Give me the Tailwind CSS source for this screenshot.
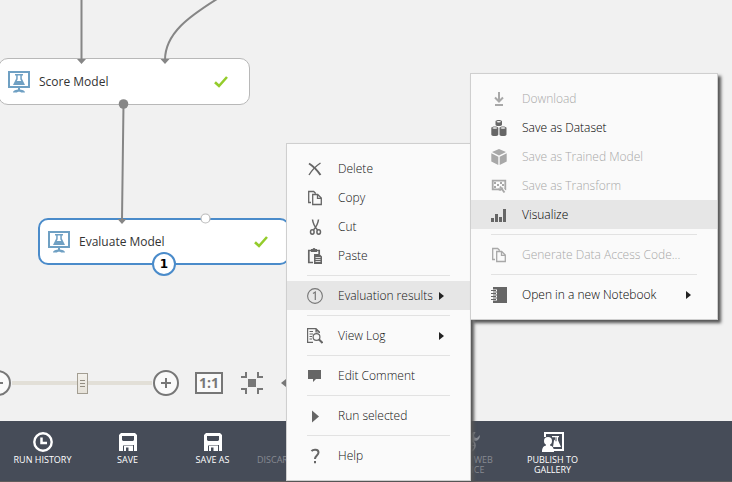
<!DOCTYPE html>
<html lang="en">
<head>
<meta charset="utf-8">
<meta name="viewport" content="width=device-width, initial-scale=1">
<title>Experiment</title>
<script src="https://cdn.jsdelivr.net/npm/@tailwindcss/browser@4"></script>
</head>
<body class="bg-[#f1f1f1] font-['Open_Sans','Noto_Sans',sans-serif] text-[12px] text-[#333]">
<svg class="hidden">
  <symbol id="module" viewBox="0 0 22 22">
    <path d="M1 1h20v15H1z" fill="#fff" stroke="#6fa0c3" stroke-width="2"/>
    <path d="M7 3h8v1.500h-1.200v3L17 14H5l3.200-6.500v-3H7z" fill="#6fa0c3"/>
    <path d="M9.700 4.500h2.600v3.700l.9 1.800H8.800l.9-1.800z" fill="#fff"/>
    <path d="M10 16h2v2.500h-2zM5 21.500c0-2 3-3 6-3s6 1 6 3h-4c0-1-4-1-4 0z" fill="#6fa0c3"/>
  </symbol>
  <symbol id="check" viewBox="0 0 14 12"><path d="M1 6.200 5 10 13 1" fill="none" stroke="#94cc2b" stroke-width="2.600"/></symbol>
  <symbol id="copy" viewBox="0 0 16 16"><path d="M4 12.500H1.700V1.500h5l2 2M5.700 4.500h5l3.600 3.600v6.400H5.700zM10.500 4.500v3.800h3.800" fill="none" stroke="currentColor" stroke-width="1.300"/></symbol>
  <symbol id="arrow" viewBox="0 0 5 8"><path d="M0 0l5 4-5 4z" fill="#222"/></symbol>
  <symbol id="floppy" viewBox="0 0 18 18"><path fill-rule="evenodd" d="M2 0h14l2 2v16h-3v-6H4v6H0V2zM3 3v4l1 1h10l1-1V3z" fill="#fff"/><path fill-rule="evenodd" d="M5 13h9v5H5zM7 14.500V18h2.500v-3.500z" fill="#fff"/><path d="M4 11.500h10v1H4z" fill="#fff"/></symbol>
</svg>
<div class="relative flex min-h-screen flex-col overflow-hidden">
  <main class="relative flex flex-1 flex-col justify-end pb-[25px]">
    <!-- Experiment graph -->
    <section aria-label="Experiment canvas">
      <div class="absolute top-[58px] left-[-2px] flex h-[47px] w-[252px] items-center rounded-[10px] border border-[#b8b8b8] bg-white pr-[21px] pl-[9px]">
        <svg class="size-[22px]"><use href="#module"/></svg>
        <span class="ml-[9px] flex-1">Score Model</span>
        <svg class="h-3 w-3.5"><use href="#check"/></svg>
      </div>
      <div class="absolute top-[218px] left-[38px] flex h-[47px] w-[252px] items-center rounded-[10px] border-2 border-[#4a8bca] bg-white pr-[20px] pl-[8px]">
        <svg class="size-[22px]"><use href="#module"/></svg>
        <span class="ml-[9px] flex-1">Evaluate Model</span>
        <svg class="h-3 w-3.5"><use href="#check"/></svg>
      </div>
      <svg class="absolute top-0 left-0 h-[300px] w-[285px]" fill="none" stroke="#868686" stroke-width="2">
        <path d="M81.500 0V60M165 60C165 33 190 16 217-1M123.500 104 122 219"/>
        <path d="M77 59h9l-4.500 5zM160.500 59h9l-4.500 5zM117.500 219h9l-4.500 5z" fill="#868686" stroke="none"/>
        <circle cx="123.500" cy="104" r="4.800" fill="#868686" stroke="none"/>
        <circle cx="205.500" cy="218.500" r="4.500" fill="#fff" stroke="#bbb" stroke-width="1.200"/>
      </svg>
      <span class="absolute top-[252px] left-[152px] flex size-6 items-center justify-center rounded-full border-2 border-[#4a8bca] bg-white font-['DejaVu_Sans',sans-serif] text-[12px] font-bold text-black">1</span>
    </section>
    <!-- Zoom controls -->
    <div class="-ml-[15px] flex h-[26px] items-center text-[#777]">
      <button aria-label="Zoom out"><svg class="size-[26px]" viewBox="0 0 26 26" fill="#fafafa" stroke="currentColor" stroke-width="2"><circle cx="13" cy="13" r="12"/><path d="M8 13h10"/></svg></button>
      <input type="range" aria-label="Zoom level" min="0" max="100" value="50" class="mx-px h-[22px] w-[140px] appearance-none bg-[linear-gradient(#e2dfd7,#e2dfd7)] bg-[length:100%_4px] bg-center bg-no-repeat [&::-webkit-slider-thumb]:h-[21px] [&::-webkit-slider-thumb]:w-[11px] [&::-webkit-slider-thumb]:appearance-none [&::-webkit-slider-thumb]:border [&::-webkit-slider-thumb]:border-[#a39e92] [&::-webkit-slider-thumb]:bg-[linear-gradient(#928d82_1px,transparent_1px_3px,#928d82_3px_4px,transparent_4px_6px,#928d82_6px_7px),linear-gradient(#f3f1ec,#e6e2d9)] [&::-webkit-slider-thumb]:bg-[length:5px_7px,100%_100%] [&::-webkit-slider-thumb]:bg-center [&::-webkit-slider-thumb]:bg-no-repeat">
      <button aria-label="Zoom in"><svg class="size-[26px]" viewBox="0 0 26 26" fill="#fafafa" stroke="currentColor" stroke-width="2"><circle cx="13" cy="13" r="12"/><path d="M8 13h10M13 8v10"/></svg></button>
      <button class="ml-4 flex h-[22px] w-7 items-center justify-center border-2 border-current bg-[#fafafa] text-[14px] leading-none font-bold">1:1</button>
      <button class="ml-[18px]" aria-label="Fit to screen"><svg class="size-[22px]" viewBox="0 0 22 22"><path d="M7 7h8v8H7z" fill="currentColor"/><path d="M0 5h5V0M17 0v5h5M0 17h5v5M17 22v-5h5" fill="none" stroke="currentColor" stroke-width="2"/></svg></button>
      <button class="ml-[18px]" aria-label="Collapse"><svg class="h-2 w-[5px]" viewBox="0 0 5 8"><path d="M5 0v8L0 4z" fill="currentColor"/></svg></button>
    </div>
  </main>

  <footer class="flex h-[61px] items-start border-b border-[#605c5c] bg-[#464c58] pt-[11px] text-[9px] leading-[10px] text-white [&>button]:flex [&>button]:w-[85px] [&>button]:shrink-0 [&>button]:flex-col [&>button]:items-center [&>button]:gap-[3px] [&>button]:whitespace-nowrap">
    <button><svg class="size-5" viewBox="0 0 20 20" fill="none" stroke="#fff"><circle cx="10" cy="10" r="8.700" stroke-width="2.400"/><path d="M8.500 5.500V11h5.500" stroke-width="2.500"/></svg>RUN HISTORY</button>
    <button><svg class="my-px size-[18px]"><use href="#floppy"/></svg>SAVE</button>
    <button><svg class="my-px size-[18px]"><use href="#floppy"/></svg>SAVE AS</button>
    <button disabled class="text-[#868a92]"><svg class="size-5" viewBox="0 0 20 20"><path d="M4 4l12 12M16 4 4 16" stroke="currentColor" stroke-width="2.500"/></svg>DISCARD CHANGES</button>
    <button><svg class="size-5" viewBox="0 0 20 20"><path d="M4 2l13 8-13 8z" fill="#fff"/></svg>RUN</button>
    <button disabled class="text-[#868a92]"><svg class="h-5 w-6" viewBox="0 0 24 20" fill="none" stroke="currentColor"><circle cx="13" cy="13.500" r="6" stroke-width="1.500"/><path d="M7 13.500h12M13 8c-3 4-3 7 0 11M13 8c3 4 3 7 0 11"/><path d="M20-1c-5 1-6 5-4 7L8 15l2.500 2.500L18 8.500c3 1 6-1 6-5.500l-3 3-2.500-.5-.5-2.500z" fill="currentColor" stroke="none"/></svg><span>SET UP WEB<br>SERVICE</span></button>
    <button><svg class="h-5 w-[22px]" viewBox="0 0 22 20" fill="#fff"><path fill-rule="evenodd" d="M2 0h20v19H11v-2h9V2H4v3H2z"/><path d="M10 4h7v1.200h-1v3l3 6.800h-8l1-6.500 1-1V5.200h-3z"/><path d="M13.500 5.200h1v4h-1z" fill="#464c58"/><circle cx="6" cy="9" r="4"/><path d="M0 20c0-5 2-6 4-6.500V11h4v2.500c2 .5 4 1.500 4 6.500z"/></svg><span>PUBLISH TO<br>GALLERY</span></button>
  </footer>

  <!-- Module context menu -->
  <div role="menu" class="absolute top-[143px] left-[286px] w-[185px] border border-[#cfcfcf] bg-[#fafafa] py-[10px] font-light text-[#111] shadow-[3px_3px_3px_#555] [&>button]:flex [&>button]:h-[29px] [&>button]:w-full [&>button]:items-center [&>button]:gap-[15px] [&>button]:px-5 [&>button]:text-left [&>button]:whitespace-nowrap [&>hr]:mx-5 [&>hr]:my-[5px] [&>hr]:border-[#e2e2e2]">
    <button role="menuitem"><svg class="size-4 shrink-0 text-[#666]" viewBox="0 0 16 16" fill="none" stroke="currentColor"><path d="M2 2.500C6 5 10 9 13.500 14" stroke-width="2"/><path d="M13.500 2C9 5 5 9 2 14" stroke-width="1.400"/></svg>Delete</button>
    <button role="menuitem"><svg class="size-4 shrink-0 text-[#666]"><use href="#copy"/></svg>Copy</button>
    <button role="menuitem"><svg class="size-4 shrink-0 text-[#666]" viewBox="0 0 16 16" fill="none" stroke="currentColor" stroke-width="1.500"><path d="M5.500.5C6 5 8 8 10.500 11M11.500.5C11 5 9 8 6.500 11"/><ellipse cx="5.300" cy="13" rx="1.800" ry="2.200"/><ellipse cx="11.700" cy="13" rx="1.800" ry="2.200"/></svg>Cut</button>
    <button role="menuitem"><svg class="size-4 shrink-0 text-[#666]" viewBox="0 0 16 16"><path d="M6 14.500H1.800V2.500h10.400V6" fill="none" stroke="currentColor" stroke-width="1.700"/><path d="M4 1h1.500L6.500 0h1l1 1H10v3H4zM7 6h5.500L15 8.500V16H7z" fill="currentColor"/><path d="M8.500 9.500h5M8.500 11.500h5M8.500 13.500h5" stroke="#fafafa" stroke-width=".8"/></svg>Paste</button>
    <hr>
    <button role="menuitem" aria-haspopup="true" class="bg-[#e6e6e6]"><svg class="size-4 shrink-0 text-[#777]" viewBox="0 0 16 16" fill="none" stroke="currentColor"><circle cx="8" cy="8" r="7.400" stroke-width="1.100"/><path d="M6 5.500 8.300 4v8" stroke-width="1.200"/></svg><span class="-mr-[15px] min-w-0 flex-1">Evaluation results</span><svg class="mr-1.5 h-2 w-[5px] shrink-0"><use href="#arrow"/></svg></button>
    <hr>
    <button role="menuitem" aria-haspopup="true"><svg class="size-4 shrink-0 text-[#666]" viewBox="0 0 16 16" fill="none" stroke="currentColor" stroke-width="1.200"><path d="M6 14.400H.6V.6H9l3.400 3.400v1M9 .6V4h3.400M2.500 3.500H6M2.500 6H6M2.500 8.500H5M2.500 11H5"/><circle cx="9.500" cy="9" r="3.400"/><path d="m12 11.500 3.500 3.500" stroke-width="2"/></svg><span class="-mr-[15px] min-w-0 flex-1">View Log</span><svg class="mr-1.5 h-2 w-[5px] shrink-0"><use href="#arrow"/></svg></button>
    <hr>
    <button role="menuitem"><svg class="size-4 shrink-0 text-[#666]" viewBox="0 0 16 16"><path d="M1 2h13v9H9l-3 3v-3H1z" fill="currentColor"/></svg>Edit Comment</button>
    <hr>
    <button role="menuitem"><svg class="size-4 shrink-0 text-[#666]" viewBox="0 0 16 16"><path d="M5 2.500 12 8.500 5 14.500z" fill="currentColor"/></svg>Run selected</button>
    <hr>
    <button role="menuitem"><svg class="size-4 shrink-0 text-[#666]" viewBox="0 0 16 16" fill="none" stroke="currentColor" stroke-width="2"><path d="M4.500 3.200C6 1.300 11.500 1 11.500 4.500 11.500 7.500 8 7.500 8 11M8 13v2.200"/></svg>Help</button>
  </div>

  <!-- Evaluation results submenu -->
  <div role="menu" class="absolute top-[73px] left-[470px] w-[248px] border border-[#cfcfcf] bg-[#fafafa] py-[10px] font-light text-black shadow-[3px_3px_3px_#555] [&>button]:flex [&>button]:h-[29px] [&>button]:w-full [&>button]:items-center [&>button]:gap-[15px] [&>button]:px-5 [&>button]:text-left [&>button]:whitespace-nowrap [&>button]:disabled:text-[#a8a8a8] [&>hr]:mx-5 [&>hr]:my-[5px] [&>hr]:border-[#e2e2e2]">
    <button role="menuitem" disabled><svg class="size-4 shrink-0" viewBox="0 0 16 16" fill="none" stroke="currentColor" stroke-width="2"><path d="M8 1v9M4 6.500l4 4 4-4M4 14h8"/></svg>Download</button>
    <button role="menuitem"><svg class="size-4 shrink-0 text-[#666]" viewBox="0 0 16 16" fill="currentColor"><path d="M4.500 1.500c0-2 6.500-2 6.500 0v3c0 2-6.500 2-6.500 0zM.3 8c0-2 7-2 7 0v6.500c0 2-7 2-7 0zM8.500 8c0-2 7-2 7 0v6.500c0 2-7 2-7 0z"/><g fill="#fafafa"><ellipse cx="7.750" cy="1.700" rx="2.200" ry=".8"/><ellipse cx="3.800" cy="8" rx="2.500" ry=".8"/><ellipse cx="12" cy="8" rx="2.500" ry=".8"/></g></svg>Save as Dataset</button>
    <button role="menuitem" disabled><svg class="size-4 shrink-0" viewBox="0 0 16 16" fill="currentColor"><path d="M8 0l7 3-7 3.500L1 3zM.3 4.200 7.300 7.700V16l-7-3.500zM15.700 4.200l-7 3.500V16l7-3.500z"/></svg>Save as Trained Model</button>
    <button role="menuitem" disabled><svg class="size-4 shrink-0" viewBox="0 0 16 16"><path d="M1.700 2.700h12.600v8.600H1.700z" fill="none" stroke="currentColor" stroke-width="1.800"/><path d="M3 4h2v2H3zM6 6h2v2H6zM9 4h2v2H9zM3 8h2v2H3zM11 6h2v2h-2z" fill="currentColor"/><path d="m8.500 8 5.500 7" stroke="#fafafa" stroke-width="4"/><path d="m9 8.500 4.500 6M7.500 10.500c1 2 3 1.500 4-1" fill="none" stroke="currentColor" stroke-width="2"/></svg>Save as Transform</button>
    <button role="menuitem" class="bg-[#e6e6e6]"><svg class="size-4 shrink-0 text-[#666]" viewBox="0 0 16 16" fill="currentColor"><path d="M0 11h3v4H0zM4 7h3v8H4zM8 10h3v5H8zM12 2h3v13h-3z"/></svg>Visualize</button>
    <hr>
    <button role="menuitem" disabled><svg class="size-4 shrink-0"><use href="#copy"/></svg>Generate Data Access Code...</button>
    <hr>
    <button role="menuitem" aria-haspopup="true"><svg class="size-4 shrink-0 text-[#666]" viewBox="0 0 16 16"><path d="M2 0h14v16H2z" fill="currentColor"/><path d="M1 3.500h5M1 6.500h5M1 9.500h5M1 12.500h5" stroke="#fafafa" stroke-width="2"/><path d="M0 3.500h5M0 6.500h5M0 9.500h5M0 12.500h5" stroke="currentColor"/></svg><span class="-mr-[15px] min-w-0 flex-1">Open in a new Notebook</span><svg class="mr-1.5 h-2 w-[5px] shrink-0"><use href="#arrow"/></svg></button>
  </div>
</div>
</body>
</html>
